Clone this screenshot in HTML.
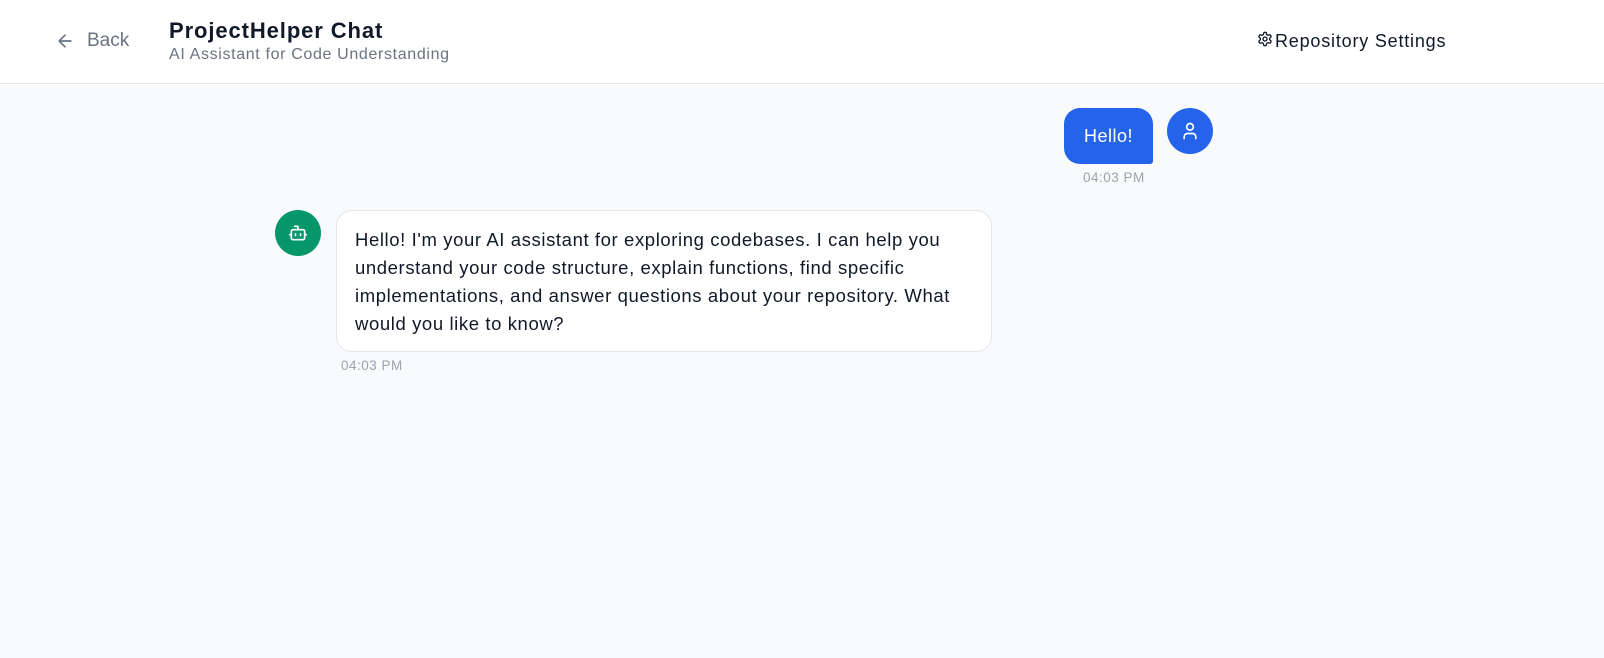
<!DOCTYPE html>
<html><head><style>
*{margin:0;padding:0;box-sizing:border-box}
body{width:1604px;height:658px;background:#f9fafb;font-family:"Liberation Sans",sans-serif;position:relative;overflow:hidden}
.hdr{position:absolute;left:0;top:0;width:1604px;height:84px;background:#fff;border-bottom:1px solid #e5e7eb}
.abs{position:absolute;white-space:nowrap}
.ts{font-size:13.5px;letter-spacing:0.5px;color:#9ca3af}
</style></head><body>
<div class="hdr"></div>
<svg class="abs" style="left:55px;top:31px" width="20" height="20" viewBox="0 0 24 24" fill="none" stroke="#6b7280" stroke-width="2" stroke-linecap="round" stroke-linejoin="round"><path d="M19 12H5M12 19l-7-7 7-7"/></svg>
<div class="abs" style="left:87px;top:30px;font-size:19px;color:#6b7280">Back</div>
<div class="abs" style="left:169px;top:18px;font-size:22px;letter-spacing:0.9px;font-weight:bold;color:#111827">ProjectHelper Chat</div>
<div class="abs" style="left:169px;top:46px;font-size:16px;letter-spacing:0.65px;color:#6b7280">AI Assistant for Code Understanding</div>
<svg class="abs" style="left:1257px;top:31px" width="16" height="16" viewBox="0 0 24 24" fill="none" stroke="#111827" stroke-width="2" stroke-linecap="round" stroke-linejoin="round"><path d="M12.22 2h-.44a2 2 0 0 0-2 2v.18a2 2 0 0 1-1 1.73l-.43.25a2 2 0 0 1-2 0l-.15-.08a2 2 0 0 0-2.730.73l-.22.38a2 2 0 0 0 .73 2.73l.15.1a2 2 0 0 1 1 1.72v.51a2 2 0 0 1-1 1.74l-.15.09a2 2 0 0 0-.73 2.73l.22.38a2 2 0 0 0 2.73.73l.15-.08a2 2 0 0 1 2 0l.43.25a2 2 0 0 1 1 1.73V20a2 2 0 0 0 2 2h.44a2 2 0 0 0 2-2v-.18a2 2 0 0 1 1-1.73l.43-.25a2 2 0 0 1 2 0l.15.08a2 2 0 0 0 2.73-.73l.22-.39a2 2 0 0 0-.73-2.73l-.15-.08a2 2 0 0 1-1-1.74v-.5a2 2 0 0 1 1-1.740l.15-.09a2 2 0 0 0 .73-2.73l-.22-.38a2 2 0 0 0-2.73-.73l-.15.08a2 2 0 0 1-2 0l-.43-.25a2 2 0 0 1-1-1.73V4a2 2 0 0 0-2-2z"/><circle cx="12" cy="12" r="3"/></svg>
<div class="abs" style="left:1275px;top:31px;font-size:18px;letter-spacing:0.8px;color:#111827">Repository Settings</div>

<div class="abs" style="left:1064px;top:108px;width:89px;height:56px;background:#2563eb;border-radius:16px 16px 3px 16px;color:#fff;font-size:18px;letter-spacing:0.5px;line-height:56px;text-align:center">Hello!</div>
<div class="abs" style="left:1167px;top:108px;width:46px;height:46px;border-radius:50%;background:#2563eb"></div>
<svg class="abs" style="left:1180px;top:121px" width="20" height="20" viewBox="0 0 24 24" fill="none" stroke="#fff" stroke-width="2" stroke-linecap="round"><circle cx="12" cy="7" r="4"/><path d="M19 21v-2a4 4 0 0 0-4-4H9a4 4 0 0 0-4 4v2"/></svg>
<div class="abs ts" style="left:1083px;top:170px">04:03 PM</div>

<div class="abs" style="left:275px;top:210px;width:46px;height:46px;border-radius:50%;background:#059669"></div>
<svg class="abs" style="left:288px;top:223px" width="20" height="20" viewBox="0 0 24 24" fill="none" stroke="#fff" stroke-width="2" stroke-linecap="round" stroke-linejoin="round"><path d="M12 8V4H8"/><rect x="4" y="8" width="16" height="12" rx="2"/><path d="M2 14h2M20 14h2M15 13v2M9 13v2"/></svg>
<div class="abs" style="left:336px;top:210px;width:656px;height:142px;background:#fff;border:1px solid #e5e7eb;border-radius:16px;padding:15px 18px;font-size:18.5px;letter-spacing:0.6px;line-height:28px;color:#111827;white-space:nowrap">Hello! I'm your AI assistant for exploring codebases. I can help you<br>understand your code structure, explain functions, find specific<br>implementations, and answer questions about your repository. What<br>would you like to know?</div>
<div class="abs ts" style="left:341px;top:358px">04:03 PM</div>
</body></html>
